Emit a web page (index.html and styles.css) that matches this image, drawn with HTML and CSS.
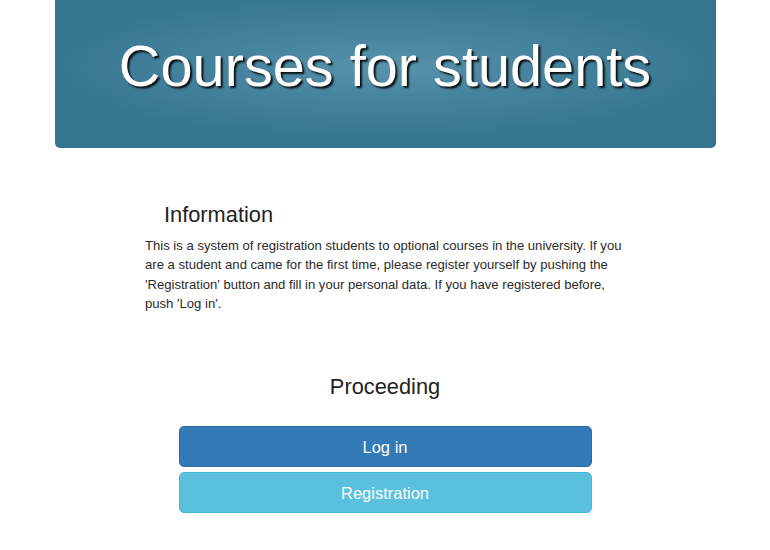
FILE: index.html
```html
<!DOCTYPE html>
<html lang="en">
<head>
<meta charset="utf-8">
<title>Courses for students</title>
<link rel="stylesheet" href="styles.css">
</head>
<body>
<div class="container">
  <header class="banner">
    <h1 class="banner-title">Courses for students</h1>
  </header>
  <section class="info">
    <h2 class="info-title">Information</h2>
    <p class="info-text">This is a system of registration students to optional courses in the university. If you are a student and came for the first time, please register yourself by pushing the 'Registration' button and fill in your personal data. If you have registered before, push 'Log in'.</p>
  </section>
  <section class="proceed">
    <h2 class="proceed-title">Proceeding</h2>
    <div class="actions">
      <a class="btn btn-primary" href="#">Log in</a>
      <a class="btn btn-info" href="#">Registration</a>
    </div>
  </section>
</div>
</body>
</html>
```
FILE: styles.css
```css
html, body {
  margin: 0;
  padding: 0;
  background: #ffffff;
}
body {
  font-family: "Liberation Sans", Arial, sans-serif;
  color: #333333;
}
.container {
  width: 661px;
  margin: 0 auto;
}
.banner {
  height: 148px;
  border-radius: 0 0 5px 5px;
  background: radial-gradient(ellipse 55% 50% at 50% 45%, #5a94ad 0%, #4884a0 40%, #35758f 100%);
  display: flex;
  align-items: center;
  justify-content: center;
}
.banner-title {
  margin: 0;
  padding-bottom: 16px;
  font-size: 57.7px;
  line-height: 64px;
  font-weight: normal;
  color: #ffffff;
  text-shadow: 2px 2px 2px rgba(0, 0, 0, 0.9);
}
.info {
  width: 482px;
  margin: 55px auto 0;
  padding-left: 2px;
}
.info-title {
  margin: 0 0 9px 19px;
  font-size: 21.8px;
  line-height: 24px;
  font-weight: normal;
  color: #222222;
}
.info-text {
  margin: 0;
  font-size: 13.1px;
  line-height: 19.3px;
  color: #2b2b2b;
}
.proceed {
  margin-top: 62px;
}
.proceed-title {
  margin: 0 0 27px;
  text-align: center;
  font-size: 21.8px;
  line-height: 24px;
  font-weight: normal;
  color: #222222;
}
.actions {
  width: 413px;
  margin: 0 auto;
  display: flex;
  flex-direction: column;
  gap: 5px;
}
.btn {
  display: block;
  box-sizing: border-box;
  height: 41px;
  line-height: 40px;
  border: 1px solid transparent;
  border-radius: 5px;
  text-align: center;
  text-decoration: none;
  color: #ffffff;
  font-size: 16.5px;
}
.btn-primary {
  background: #337ab7;
  border-color: #2e6da4;
}
.btn-info {
  background: #5bc0de;
  border-color: #46b8da;
}
```
